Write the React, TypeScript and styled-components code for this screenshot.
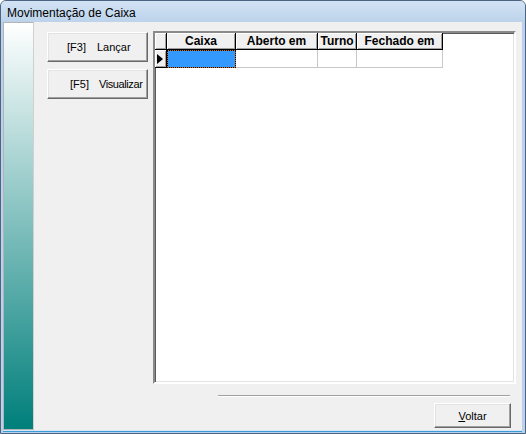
import React from "react";
import styled, { createGlobalStyle } from "styled-components";

const GlobalStyle = createGlobalStyle`
  html, body {
    margin: 0;
    padding: 0;
    background: #ffffff;
  }
  * {
    box-sizing: border-box;
  }
`;

const Window = styled.div`
  width: 526px;
  height: 434px;
  display: flex;
  flex-direction: column;
  border: 1px solid #4b6582;
  border-radius: 6px 6px 0 0;
  background: #b9d1ea;
  padding: 0 3px 3px 2px;
  overflow: hidden;
  font-family: "Liberation Sans", Arial, sans-serif;
  color: #000;
`;

const TitleBar = styled.div`
  height: 21px;
  margin: 0 -3px 0 -2px;
  padding: 3px 0 0 6px;
  line-height: 18px;
  font-size: 12px;
  background: linear-gradient(#d3e3f4, #bcd3eb);
`;

const Client = styled.div`
  flex: 1;
  display: flex;
  background: #f0f0f0;
  box-shadow: 0 1px 0 #d8e6f4, 0 2px 0 #3a9bd8;
`;

const Sidebar = styled.div`
  width: 31px;
  border: 1px solid #b4b4b4;
  border-right-color: #d0d0d0;
  background: linear-gradient(#ffffff, #007f7b);
`;

const Main = styled.div`
  flex: 1;
  display: flex;
  flex-direction: column;
  padding: 9px 6px 2px 13px;
`;

const TopRow = styled.div`
  display: flex;
  height: 353px;
`;

const ButtonColumn = styled.div`
  width: 101px;
  margin: 1px 5px 0 0;
  display: flex;
  flex-direction: column;
  gap: 7px;
`;

const ClassicButton = styled.button<{ $w?: number; $h: number; $pad?: number; $gap?: number }>`
  width: ${(p) => (p.$w ? `${p.$w}px` : "100%")};
  height: ${(p) => p.$h}px;
  display: flex;
  align-items: center;
  justify-content: ${(p) => (p.$pad !== undefined ? "flex-start" : "center")};
  gap: ${(p) => p.$gap ?? 12}px;
  padding: 0 0 0 ${(p) => p.$pad ?? 0}px;
  margin: 0;
  background: #f0f0f0;
  border: 1px solid;
  border-color: #ffffff #696969 #696969 #ffffff;
  box-shadow: inset -1px -1px 0 #a0a0a0, inset 1px 1px 0 #e3e3e3;
  font-family: "Liberation Sans", Arial, sans-serif;
  font-size: 11px;
  color: #000;
  white-space: nowrap;
  overflow: hidden;
`;

const Label = styled.span<{ $tracking?: number }>`
  letter-spacing: ${(p) => p.$tracking ?? 0}px;
`;

const Grid = styled.div`
  flex: 1;
  border: 2px solid;
  border-color: #8a8a8a #ffffff #ffffff #8a8a8a;
  box-shadow: inset 1px 1px 0 #5a5a5a, inset -1px -1px 0 #e3e3e3;
  background: #ffffff;
  padding: 0;
`;

const Table = styled.div`
  display: grid;
  grid-template-columns: 12px 69px 82px 39px 86px;
  grid-template-rows: 17px 18px;
  width: max-content;
`;

const HeaderCell = styled.div`
  background: #f0f0f0;
  border-right: 1px solid #000;
  border-bottom: 1px solid #000;
  box-shadow: inset 1px 1px 0 #ffffff, inset -1px -1px 0 #a0a0a0;
  font-size: 12px;
  font-weight: bold;
  text-align: center;
  line-height: 16px;
`;

const IndicatorCell = styled.div`
  background: #f0f0f0;
  border-right: 1px solid #000;
  border-bottom: 1px solid #000;
  box-shadow: inset 1px 1px 0 #ffffff, inset -1px -1px 0 #a0a0a0;
  display: flex;
  align-items: center;
  padding-left: 2px;
`;

const Arrow = styled.div`
  width: 0;
  height: 0;
  border-top: 5px solid transparent;
  border-bottom: 5px solid transparent;
  border-left: 6px solid #000;
`;

const DataCell = styled.div<{ $selected?: boolean }>`
  border-right: 1px solid #c8c8c8;
  border-bottom: 1px solid #c8c8c8;
  ${(p) =>
    p.$selected &&
    `
    border: 1px dotted #000;
    background: linear-gradient(#3399ff, #3399ff) padding-box, #c8741a border-box;
  `}
`;

const Separator = styled.div`
  height: 2px;
  margin: 11px 6px 0 171px;
  border-top: 1px solid #a0a0a0;
  border-bottom: 1px solid #ffffff;
`;

const Footer = styled.div`
  display: flex;
  justify-content: flex-end;
  margin-top: 6px;
  padding-right: 5px;
`;

const Key = styled.u`
  text-decoration: underline;
`;

export default function App() {
  const columns = ["Caixa", "Aberto em", "Turno", "Fechado em"];
  return (
    <>
      <GlobalStyle />
      <Window>
        <TitleBar>Movimentação de Caixa</TitleBar>
        <Client>
          <Sidebar />
          <Main>
            <TopRow>
              <ButtonColumn>
                <ClassicButton $h={30} $pad={19} $gap={11}>
                  <Label>[F3]</Label>
                  <Label>Lançar</Label>
                </ClassicButton>
                <ClassicButton $h={30} $pad={22} $gap={10}>
                  <Label>[F5]</Label>
                  <Label $tracking={-0.4}>Visualizar</Label>
                </ClassicButton>
              </ButtonColumn>
              <Grid>
                <Table>
                  <IndicatorCell />
                  {columns.map((c) => (
                    <HeaderCell key={c}>{c}</HeaderCell>
                  ))}
                  <IndicatorCell>
                    <Arrow />
                  </IndicatorCell>
                  <DataCell $selected />
                  <DataCell />
                  <DataCell />
                  <DataCell />
                </Table>
              </Grid>
            </TopRow>
            <Separator />
            <Footer>
              <ClassicButton $w={77} $h={25}>
                <span>
                  <Key>V</Key>oltar
                </span>
              </ClassicButton>
            </Footer>
          </Main>
        </Client>
      </Window>
    </>
  );
}
